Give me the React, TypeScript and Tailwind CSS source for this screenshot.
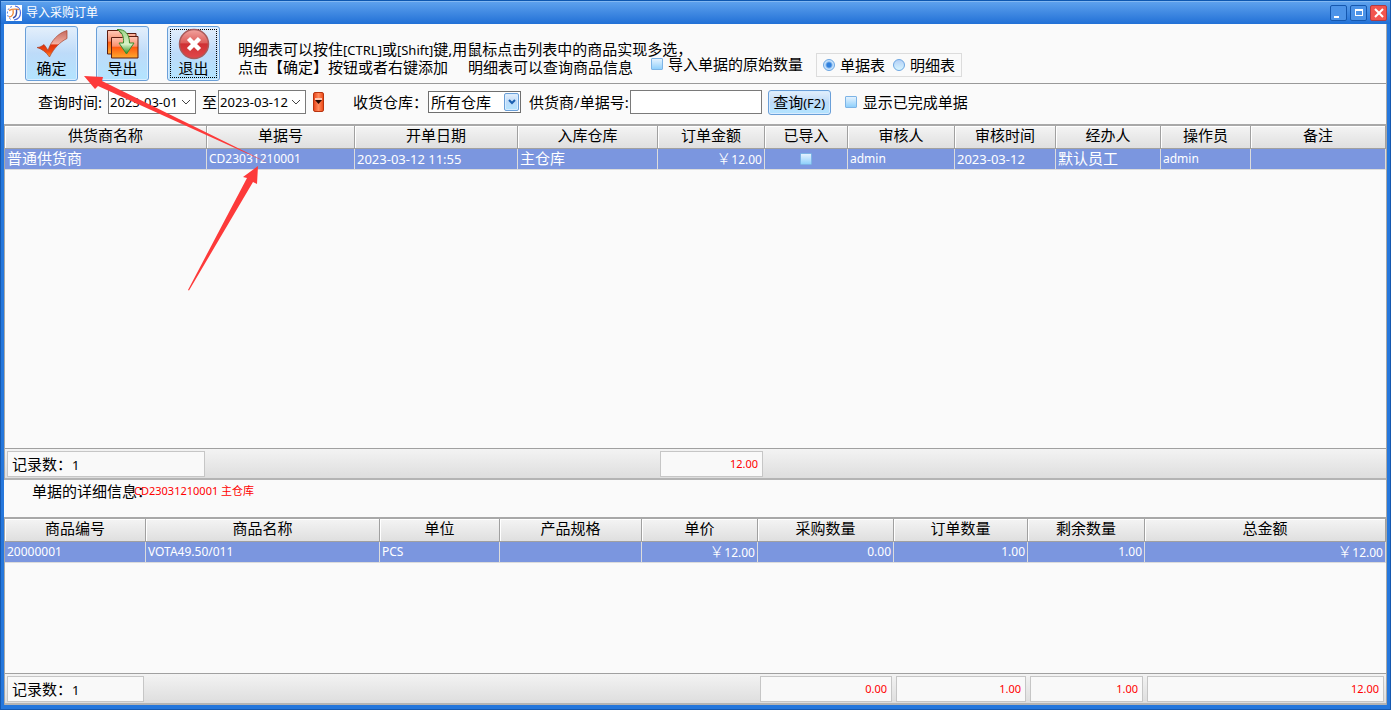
import { useState, type ReactNode } from "react";
import clsx from "clsx";

type Column = {
  title: string;
  width: string;
  value: ReactNode;
  align?: "right" | "center";
  total?: string;
};

const glossy =
  "border border-[#6a9fd8] bg-linear-to-b from-[#e4effb] via-[#bddbf9] to-[#b2e4ff] shadow-[inset_0_0_0_1px_#d8ecff]";
const checkbox =
  "size-3 shrink-0 appearance-none rounded-[1px] border border-[#7db4e6] bg-linear-to-b from-[#e4f2fe] to-[#8fd0fb] checked:from-[#2f80d8] checked:to-[#2f80d8]";
const radio =
  "size-3 shrink-0 appearance-none rounded-full border border-[#6ba6e2] bg-linear-to-b from-[#b4d0f6] to-[#d6f4ff] checked:bg-[radial-gradient(circle,#2f7fdc_0_2px,#c6e2fc_4px)]";

const orderColumns: Column[] = [
  { title: "供货商名称", width: "w-[202px]", value: "普通供货商" },
  { title: "单据号", width: "w-[148px]", value: "CD23031210001" },
  { title: "开单日期", width: "w-[163px]", value: <span className="text-[13px]">2023-03-12 11:55</span> },
  { title: "入库仓库", width: "w-[140px]", value: "主仓库" },
  { title: "订单金额", width: "w-[107px]", value: "¥12.00", align: "right", total: "12.00" },
  {
    title: "已导入",
    width: "w-[83px]",
    value: <input type="checkbox" aria-label="已导入" className={clsx(checkbox, "block")} />,
    align: "center",
  },
  { title: "审核人", width: "w-[107px]", value: "admin" },
  { title: "审核时间", width: "w-[101px]", value: <span className="text-[13px]">2023-03-12</span> },
  { title: "经办人", width: "w-[105px]", value: "默认员工" },
  { title: "操作员", width: "w-[90px]", value: "admin" },
  { title: "备注", width: "w-auto", value: "" },
];

const detailColumns: Column[] = [
  { title: "商品编号", width: "w-[141px]", value: "20000001" },
  { title: "商品名称", width: "w-[234px]", value: "VOTA49.50/011" },
  { title: "单位", width: "w-[120px]", value: "PCS" },
  { title: "产品规格", width: "w-[142px]", value: "" },
  { title: "单价", width: "w-[116px]", value: "¥12.00", align: "right" },
  { title: "采购数量", width: "w-[136px]", value: "0.00", align: "right", total: "0.00" },
  { title: "订单数量", width: "w-[134px]", value: "1.00", align: "right", total: "1.00" },
  { title: "剩余数量", width: "w-[117px]", value: "1.00", align: "right", total: "1.00" },
  { title: "总金额", width: "w-auto", value: "¥12.00", align: "right", total: "12.00" },
];

const isChinese = (v: ReactNode) => typeof v === "string" && /[\u4e00-\u9fff]/.test(v);

function CellValue({ value }: { value: ReactNode }) {
  if (typeof value === "string" && value.startsWith("¥")) {
    return (
      <>
        <span className="text-[15px] font-light">￥</span>
        {value.slice(1)}
      </>
    );
  }
  return <>{value}</>;
}

function DataGrid({ columns, className }: { columns: Column[]; className: string }) {
  return (
    <section className={clsx("flex flex-col border-t-2 border-l border-[#a8a8a8]", className)}>
      <table className="w-full table-fixed border-separate border-spacing-0">
        <thead>
          <tr className="h-[23px]">
            {columns.map((c) => (
              <th
                key={c.title}
                className={clsx(
                  c.width,
                  "border-r border-b border-[#a0a0a0] bg-linear-to-b from-[#f4f4f4] to-[#dfdfdf] p-0 pb-1 text-[15px] leading-4 font-normal shadow-[inset_1px_1px_0_#fff]",
                )}
              >
                {c.title}
              </th>
            ))}
          </tr>
        </thead>
        <tbody>
          <tr className="h-[21px] bg-[#7b96df] text-white">
            {columns.map((c) => (
              <td
                key={c.title}
                className={clsx(
                  "overflow-hidden border-r border-b border-[#dcdcdc] px-0.5 py-0 leading-4 whitespace-nowrap",
                  isChinese(c.value) ? "pb-0.5 text-[15px]" : "text-[12px]",
                  c.align === "right" && "text-right",
                )}
              >
                {c.align === "center" ? (
                  <div className="flex justify-center">{c.value}</div>
                ) : (
                  <CellValue value={c.value} />
                )}
              </td>
            ))}
          </tr>
        </tbody>
      </table>
      <div className="flex-1" />
      <div className="flex h-8 border-t border-b-2 border-t-[#a0a0a0] border-b-[#b4b4b4] bg-linear-to-b from-[#f3f3f3] to-[#dedede]">
        {columns.map((c, i) => (
          <div
            key={c.title}
            className={clsx(c.width === "w-auto" ? "flex-1" : c.width, "shrink-0 px-0.5 pt-0.5 pb-px")}
          >
            {(i === 0 || c.total) && (
              <div
                className={clsx(
                  "flex h-full items-center border border-[#c6c6c6] bg-[#f9f9f9] px-1",
                  c.total && "justify-end text-[11px] text-[#ff0000]",
                )}
              >
                {i === 0 ? (
                  <span className="text-[15px] leading-4">
                    记录数：<span className="text-[13px]">1</span>
                  </span>
                ) : (
                  c.total
                )}
              </div>
            )}
          </div>
        ))}
      </div>
    </section>
  );
}

function ConfirmIcon() {
  return (
    <svg viewBox="0 0 32 28" className="h-7 w-8">
      <defs>
        <linearGradient id="tick" x1="0" y1="0" x2="0" y2="1">
          <stop offset="0" stopColor="#c4685e" />
          <stop offset="0.5" stopColor="#f4b0a0" />
          <stop offset="0.55" stopColor="#e0330c" />
          <stop offset="0.8" stopColor="#f04a10" />
          <stop offset="1" stopColor="#ff9a2c" />
        </linearGradient>
      </defs>
      <path
        d="M1 17.5 C4 17.5 6 16 8 14.5 C9.5 16.5 11 18.5 12 20.5 C15 11 22 3 31 0.5 V8.5 C24 12 18 18 13.5 27 C10 22 6 19 1 17.5 Z"
        fill="url(#tick)"
        stroke="#a8442c"
        strokeWidth="0.7"
      />
    </svg>
  );
}

function ExportIcon() {
  return (
    <svg viewBox="0 0 32 30" className="h-[30px] w-8">
      <defs>
        <linearGradient id="folder" x1="0" y1="0" x2="0" y2="1">
          <stop offset="0" stopColor="#ffc9b8" />
          <stop offset="0.45" stopColor="#f9906e" />
          <stop offset="0.5" stopColor="#ff5a10" />
          <stop offset="1" stopColor="#ffab2e" />
        </linearGradient>
        <linearGradient id="down" x1="0" y1="0" x2="0" y2="1">
          <stop offset="0" stopColor="#9fd488" />
          <stop offset="0.6" stopColor="#d8f2c8" />
          <stop offset="1" stopColor="#258a1c" />
        </linearGradient>
      </defs>
      <path d="M0.5 1.5 H12 L14 4.5 H29 V25 H0.5 Z" fill="url(#folder)" stroke="#5b1d12" />
      <path d="M4.5 8.5 H15 L17 7.5 H31 V29 H4.5 Z" fill="url(#folder)" stroke="#5b1d12" />
      <path
        d="M10 0.5 C18 0 22.5 5 22.5 14 H27 L19.5 25 L12 14 H16.5 C17 7 15 3 10 0.5 Z"
        fill="url(#down)"
        stroke="#3c8c2c"
      />
    </svg>
  );
}

function ExitIcon() {
  return (
    <svg viewBox="0 0 32 32" className="size-8">
      <defs>
        <linearGradient id="exit" x1="0" y1="0" x2="0" y2="1">
          <stop offset="0" stopColor="#f2a39e" />
          <stop offset="0.45" stopColor="#dd5f5c" />
          <stop offset="0.5" stopColor="#cf3034" />
          <stop offset="1" stopColor="#e2474a" />
        </linearGradient>
      </defs>
      <circle cx="16" cy="16" r="14.5" fill="url(#exit)" stroke="#a85a5a" strokeWidth="1.5" />
      <path d="M10.5 10.5 L21.5 21.5 M21.5 10.5 L10.5 21.5" stroke="#fff" strokeWidth="4.5" />
    </svg>
  );
}

function ToolButton({ label, icon, focused }: { label: string; icon: ReactNode; focused?: boolean }) {
  return (
    <button className={clsx("h-[55px] w-[53px] rounded-[3px] p-0.5", glossy)}>
      <span
        className={clsx(
          "flex h-full flex-col items-center justify-between border border-dotted",
          focused ? "border-black" : "border-transparent",
        )}
      >
        <span className="flex h-7 items-center">{icon}</span>
        <span className="text-[15px] leading-5">{label}</span>
      </span>
    </button>
  );
}

function DateBox({ label, value }: { label: string; value: string }) {
  const [date, setDate] = useState(value);
  return (
    <span className="flex h-6 w-[88px] items-center border border-[#7a7a7a] bg-white">
      <input
        aria-label={label}
        value={date}
        onChange={(e) => setDate(e.target.value)}
        className="w-[72px] pl-px text-[13px] outline-none"
      />
      <svg viewBox="0 0 10 6" className="h-1.5 w-2.5">
        <path d="M1 1 L5 5 L9 1" fill="none" stroke="#444" />
      </svg>
    </span>
  );
}

function WarehouseSelect() {
  return (
    <span className="relative flex h-[22px] w-[93px] border border-[#6f6f6f] bg-white">
      <select id="warehouse" className="w-full appearance-none pl-0.5 text-[15px] leading-4 outline-none">
        <option>所有仓库</option>
        <option>主仓库</option>
      </select>
      <span
        className={clsx(
          "pointer-events-none absolute inset-y-px right-px flex w-[15px] items-center justify-center rounded-[2px]",
          glossy,
        )}
      >
        <svg viewBox="0 0 8 6" className="h-1.5 w-2">
          <path d="M1 1 L4 4 L7 1" fill="none" stroke="#1a5fb0" strokeWidth="2" />
        </svg>
      </span>
    </span>
  );
}

function TitleBar() {
  const box = "flex h-4 w-[17px] items-center justify-center rounded-[2px] border";
  return (
    <header className="flex h-6 items-center border-t border-[#0d57b0] bg-linear-to-b from-[#5fa3ee] to-[#2070d6] pr-[3px] pl-[5px] shadow-[inset_0_1px_0_#82b8f2]">
      <svg viewBox="0 0 16 16" className="mr-1 size-4">
        <rect width="16" height="16" fill="#fff" />
        <path d="M9 1 C16 2 17 13 8 15" fill="none" stroke="#4a6ae0" strokeWidth="1.2" />
        <path d="M6 1.5 C0 3 0 12 5 14.5" fill="none" stroke="#5f86e8" strokeDasharray="2 1.5" />
        <path d="M3 5.5 C6 4 10 4 13 4.5 M7 5 C8 9 6 12 3 12" fill="none" stroke="#f08a3c" strokeWidth="1.4" />
        <path d="M10.5 4.5 C11 9 10 12 7 13" fill="none" stroke="#3a4fa8" strokeWidth="1.4" />
      </svg>
      <h1 className="flex-1 text-[12px] text-white">导入采购订单</h1>
      <div className="flex gap-[3px]">
        <button aria-label="最小化" className={clsx(box, "border-[#1557ae] bg-[#4c93e8]")}>
          <span className="mt-2 mr-1 h-0.5 w-[5px] bg-white" />
        </button>
        <button aria-label="最大化" className={clsx(box, "border-[#1557ae] bg-[#4c93e8]")}>
          <span className="h-[7px] w-2 border border-t-2 border-white" />
        </button>
        <button aria-label="关闭" className={clsx(box, "border-[#b03a44] bg-[#f2554f]")}>
          <svg viewBox="0 0 10 10" className="size-2.5">
            <path d="M1 1 L9 9 M9 1 L1 9" stroke="#fff" strokeWidth="2" />
          </svg>
        </button>
      </div>
    </header>
  );
}

function Toolbar() {
  return (
    <div className="flex h-[60px] border-b border-[#999] pt-0.5 pl-[21px]">
      <div className="flex shrink-0 gap-[18px]">
        <ToolButton label="确定" icon={<ConfirmIcon />} />
        <ToolButton label="导出" icon={<ExportIcon />} />
        <ToolButton label="退出" icon={<ExitIcon />} focused />
      </div>
      <div className="ml-[18px] flex flex-col pt-[13px] text-[15px] leading-5 whitespace-nowrap">
        <p className="h-5">
          明细表可以按住<span className="text-[13px]">[CTRL]</span>或<span className="text-[13px]">[Shift]</span>
          键,用鼠标点击列表中的商品实现多选，
        </p>
        <div className="flex h-4 items-center">
          <p>点击【确定】按钮或者右键添加</p>
          <p className="ml-5">明细表可以查询商品信息</p>
          <label className="ml-[18px] flex items-center gap-[5px] pb-1.5">
            <input type="checkbox" className={checkbox} />
            导入单据的原始数量
          </label>
        </div>
      </div>
      <div
        role="radiogroup"
        aria-label="表类型"
        className="mt-[27px] ml-[13px] flex h-6 items-center gap-2 border border-[#dcdcdc] px-1.5 text-[15px] leading-5 whitespace-nowrap"
      >
        <label className="flex items-center gap-[5px]">
          <input type="radio" name="mode" defaultChecked className={radio} />
          单据表
        </label>
        <label className="flex items-center gap-[5px]">
          <input type="radio" name="mode" className={radio} />
          明细表
        </label>
      </div>
    </div>
  );
}

function FilterBar() {
  const [keyword, setKeyword] = useState("");
  return (
    <form
      className="flex h-10 items-center pb-1 pl-[34px] text-[15px] leading-5 whitespace-nowrap"
      onSubmit={(e) => e.preventDefault()}
    >
      <span className="mr-1.5">查询时间:</span>
      <DateBox label="开始日期" value="2023-03-01" />
      <span className="mr-px ml-1.5">至</span>
      <DateBox label="结束日期" value="2023-03-12" />
      <button
        aria-label="选择日期范围"
        className="mr-[29px] ml-[7px] flex h-5 w-[11px] items-center justify-center rounded-[2px] border border-[#b83410] bg-linear-to-r from-[#e8451a] via-[#ff8a5c] to-[#ee4a12]"
      >
        <svg viewBox="0 0 7 8" className="h-2 w-[7px]">
          <path d="M0 0 H7 V2 H0 Z" fill="#ffc9b4" />
          <path d="M0 2 H7 L3.5 6 Z" fill="#2a0a04" />
        </svg>
      </button>
      <label htmlFor="warehouse">收货仓库：</label>
      <WarehouseSelect />
      <label htmlFor="keyword" className="ml-2">
        供货商/单据号:
      </label>
      <input
        id="keyword"
        value={keyword}
        onChange={(e) => setKeyword(e.target.value)}
        className="ml-px h-6 w-[132px] border border-[#7a7a7a] bg-white px-1 text-[13px] outline-none"
      />
      <button className={clsx("ml-1.5 h-[25px] w-[63px] rounded-[3px] text-[15px] leading-5", glossy)}>
        查询<span className="text-[13px]">(F2)</span>
      </button>
      <label className="ml-[14px] flex items-center gap-1.5">
        <input type="checkbox" className={checkbox} />
        显示已完成单据
      </label>
    </form>
  );
}

/* 操作指引箭头 */
function GuideArrows() {
  return (
    <svg viewBox="0 0 200 220" className="pointer-events-none absolute top-[75px] left-20 h-[220px] w-[200px]">
      <g fill="#fd3a3a">
        <path d="M3 1 L22 2 L21 6 L187 88 L17 11 L14 14 Z" />
        <path d="M177 91 L176 109 L172 107 L108 215.5 L107 215 L166 103 L162 102 Z" />
      </g>
    </svg>
  );
}

export default function App() {
  return (
    <div className="relative flex min-h-screen flex-col border-x border-b border-[#1658ae] bg-[#2577dc] font-['Noto_Sans','Noto_Sans_CJK_SC',sans-serif] text-black">
      <TitleBar />

      <main className="mx-[3px] mb-1 flex flex-1 flex-col border-r border-[#a8a8a8] bg-[#fafafa]">
        <Toolbar />
        <FilterBar />

        <DataGrid columns={orderColumns} className="h-[356px]" />

        <p className="flex h-[37px] items-start pt-px pl-7 text-[15px] leading-5">
          单据的详细信息：
          <span className="-ml-[18px] text-[11px] text-[#ff0000]">CD23031210001 主仓库</span>
        </p>

        <DataGrid columns={detailColumns} className="flex-1" />
      </main>

      <GuideArrows />
    </div>
  );
}
